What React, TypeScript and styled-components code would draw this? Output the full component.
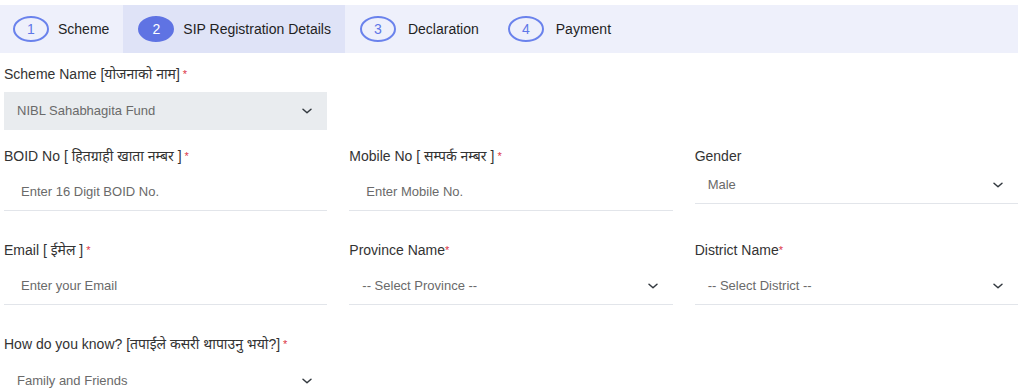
import React from "react";
import styled, { createGlobalStyle } from "styled-components";

const GlobalStyle = createGlobalStyle`
    body {
        margin: 0;
        background: #ffffff;
        font-family: "Liberation Sans", "Noto Sans Devanagari", "Noto Sans", Arial, sans-serif;
        color: #333333;
    }
`;

const Page = styled.div`
    padding: 5px 6px 0 0;
`;

const Stepper = styled.div`
    display: flex;
    align-items: stretch;
    height: 48px;
    background: #eef0fb;
`;

const Step = styled.div<{ $active?: boolean; $wide?: boolean }>`
    display: flex;
    align-items: center;
    gap: ${p => (p.$wide ? 12 : 9)}px;
    padding: 0 14px 0 15px;
    background: ${p => (p.$active ? "#dfe3f7" : "transparent")};

    &:first-child {
        padding-left: 13px;
    }
`;

const StepNumber = styled.span<{ $active?: boolean }>`
    display: flex;
    align-items: center;
    justify-content: center;
    box-sizing: border-box;
    width: 36px;
    height: 26px;
    border-radius: 50%;
    border: 2px solid;
    background: ${p => (p.$active ? "#5f73e3" : "transparent")};
    border-color: ${p => (p.$active ? "#5f73e3" : "#6a82ec")};
    color: ${p => (p.$active ? "#ffffff" : "#5f77e8")};
    font-size: 14px;
`;

const StepLabel = styled.span`
    font-size: 14px;
    color: #1f1f1f;
`;

const Form = styled.div`
    padding: 11px 0 0 4px;
`;

const Row = styled.div<{ $gap: number }>`
    display: grid;
    grid-template-columns: repeat(3, 1fr);
    column-gap: 22px;
    margin-bottom: ${p => p.$gap}px;
`;

const Field = styled.div`
    display: flex;
    flex-direction: column;
`;

const Label = styled.label`
    font-size: 14px;
    line-height: 20px;
    color: #333333;
`;

const Required = styled.span<{ $tight?: boolean }>`
    color: #dc3545;
    font-size: 11px;
    vertical-align: top;
    margin-left: ${p => (p.$tight ? 0 : 3)}px;
`;

const TextInput = styled.input`
    box-sizing: border-box;
    height: 38px;
    margin-top: 7px;
    padding: 0 17px;
    border: none;
    border-bottom: 1px solid #e2e5ea;
    background: transparent;
    font-family: inherit;
    font-size: 13px;
    outline: none;

    &::placeholder {
        color: #6a6a6a;
    }
`;

const SelectBox = styled.div<{ $filled?: boolean; $offset: number }>`
    box-sizing: border-box;
    display: flex;
    align-items: center;
    justify-content: space-between;
    height: 38px;
    margin-top: ${p => p.$offset}px;
    padding: 0 14px 0 13px;
    background: ${p => (p.$filled ? "#e9ecef" : "transparent")};
    border-bottom: 1px solid ${p => (p.$filled ? "transparent" : "#e2e5ea")};
    font-size: 13px;
    color: #6a6a6a;
`;

const Chevron = () => (
    <svg width="12" height="8" viewBox="0 0 12 8" fill="none">
        <path d="M2 2.2 L6 5.8 L10 2.2" stroke="#343a40" strokeWidth="1.5" strokeLinecap="round" strokeLinejoin="round" />
    </svg>
);

const Select: React.FC<{ value: string; filled?: boolean; offset?: number }> = ({ value, filled, offset = 7 }) => (
    <SelectBox $filled={filled} $offset={offset}>
        <span>{value}</span>
        <Chevron />
    </SelectBox>
);

const steps = ["Scheme", "SIP Registration Details", "Declaration", "Payment"];

export default function App() {
    return (
        <Page>
            <GlobalStyle />
            <Stepper>
                {steps.map((s, i) => (
                    <Step key={s} $active={i === 1} $wide={i > 1}>
                        <StepNumber $active={i === 1}>{i + 1}</StepNumber>
                        <StepLabel>{s}</StepLabel>
                    </Step>
                ))}
            </Stepper>
            <Form>
                <Row $gap={16}>
                    <Field>
                        <Label>
                            Scheme Name [योजनाको नाम]<Required>*</Required>
                        </Label>
                        <Select value="NIBL Sahabhagita Fund" filled offset={8} />
                    </Field>
                </Row>
                <Row $gap={29}>
                    <Field>
                        <Label>
                            BOID No [ हितग्राही खाता नम्बर ]<Required>*</Required>
                        </Label>
                        <TextInput placeholder="Enter 16 Digit BOID No." />
                    </Field>
                    <Field>
                        <Label>
                            Mobile No [ सम्पर्क नम्बर ]<Required>*</Required>
                        </Label>
                        <TextInput placeholder="Enter Mobile No." />
                    </Field>
                    <Field>
                        <Label>Gender</Label>
                        <Select value="Male" offset={0} />
                    </Field>
                </Row>
                <Row $gap={29}>
                    <Field>
                        <Label>
                            Email [ ईमेल ]<Required>*</Required>
                        </Label>
                        <TextInput placeholder="Enter your Email" />
                    </Field>
                    <Field>
                        <Label>
                            Province Name<Required $tight>*</Required>
                        </Label>
                        <Select value="-- Select Province --" />
                    </Field>
                    <Field>
                        <Label>
                            District Name<Required $tight>*</Required>
                        </Label>
                        <Select value="-- Select District --" />
                    </Field>
                </Row>
                <Row $gap={0}>
                    <Field>
                        <Label>
                            How do you know? [तपाईंले कसरी थापाउनु भयो?]<Required>*</Required>
                        </Label>
                        <Select value="Family and Friends" offset={8} />
                    </Field>
                </Row>
            </Form>
        </Page>
    );
}
